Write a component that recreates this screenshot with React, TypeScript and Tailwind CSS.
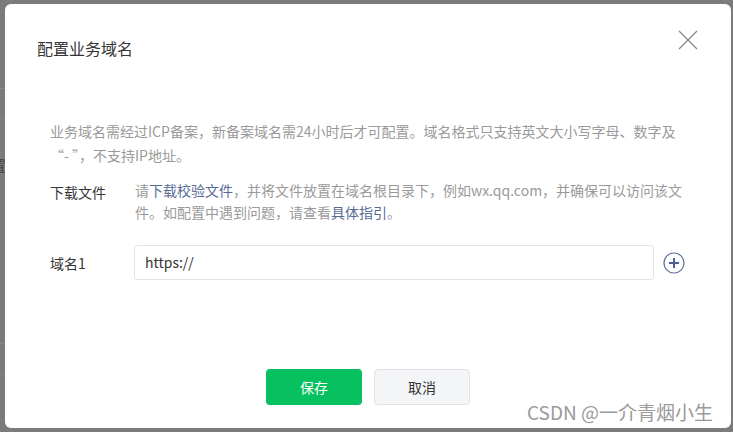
import React from "react";

const font = { fontFamily: '"Noto Sans CJK SC", "Liberation Sans", sans-serif' };

export default function App() {
  return (
    <div
      className="relative w-[733px] h-[432px] overflow-hidden bg-[#7b7b7b] pt-[4px] pl-[5px] pr-[2px] pb-[4px]"
      style={font}
    >
      {/* faint background lines */}
      <div className="absolute left-0 top-[88px] w-[5px] h-px bg-[#8a8a8a]" />
      <div className="absolute left-0 top-[118px] w-[5px] h-px bg-[#858585]" />
      <div className="absolute left-0 top-[343px] w-[5px] h-px bg-[#858585]" />
      <div className="absolute left-0 top-[374px] w-[5px] h-px bg-[#858585]" />
      <div className="absolute left-[-8px] top-[156px] text-[14px] leading-[18px] text-[#444]">置</div>

      <div className="relative flex h-full flex-col rounded-[6px] bg-white">
        {/* header */}
        <div className="flex items-start justify-between pl-[32px] pr-[33px] pt-[32px]">
          <div className="text-[16px] leading-[24px] text-[#353535]">配置业务域名</div>
          <svg width="20" height="20" viewBox="0 0 20 20" className="mt-[-6px]">
            <path d="M1 1 L19 19 M19 1 L1 19" stroke="#8a8a8a" strokeWidth="1.3" fill="none" />
          </svg>
        </div>

        {/* body */}
        <div className="flex flex-col pl-[45px] pr-[45px] pt-[59px]">
          <div className="text-[14px] leading-[24px] text-[#9a9a9a]">
            业务域名需经过ICP备案，新备案域名需24小时后才可配置。域名格式只支持英文大小写字母、数字及
            <br />
            “- ”，不支持IP地址。
          </div>

          <div className="mt-[12px] flex">
            <div className="w-[85px] shrink-0 text-[14px] leading-[22px] text-[#353535] pt-[2px]">下载文件</div>
            <div className="text-[14px] leading-[22px] text-[#9a9a9a]">
              <span>请</span>
              <span className="text-[#576b95]">下载校验文件</span>
              <span>，并将文件放置在域名根目录下，例如wx.qq.com，并确保可以访问该文</span>
              <br />
              <span>件。如配置中遇到问题，请查看</span>
              <span className="text-[#576b95]">具体指引</span>
              <span>。</span>
            </div>
          </div>

          <div className="mt-[22px] flex items-center">
            <div className="w-[84px] shrink-0 text-[14px] leading-[22px] text-[#353535]">域名1</div>
            <div className="flex h-[35px] w-[520px] items-center rounded-[3px] border border-[#e4e4e4] px-[10px] text-[14px] text-[#353535]">
              https://
            </div>
            <svg width="24" height="24" viewBox="0 0 24 24" className="ml-[8px]">
              <circle cx="12" cy="12" r="10" stroke="#5c6f99" strokeWidth="1.2" fill="none" />
              <path d="M12 7 V17 M7 12 H17" stroke="#4d6190" strokeWidth="2" />
            </svg>
          </div>
        </div>

        <div className="flex-1" />

        {/* footer */}
        <div className="flex justify-center gap-[12px] pb-[23px]">
          <button className="h-[36px] w-[96px] rounded-[4px] bg-[#07c160] text-[14px] text-white">保存</button>
          <button className="h-[36px] w-[96px] rounded-[4px] border border-[#e2e3e6] bg-[#f4f5f7] text-[14px] text-[#353535]">
            取消
          </button>
        </div>
      </div>

      <div className="absolute left-[527px] top-[399px] text-[19px] leading-[26px] text-[#9a9a9a] whitespace-nowrap">
        CSDN @一介青烟小生
      </div>
    </div>
  );
}
